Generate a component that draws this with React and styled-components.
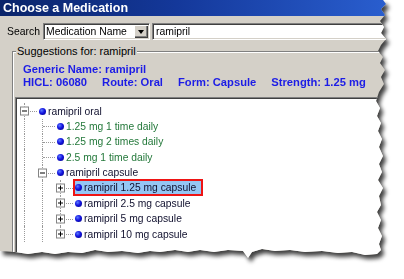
import React from "react";
import styled, { createGlobalStyle } from "styled-components";

const Global = createGlobalStyle`
  html, body { margin: 0; padding: 0; background: #ffffff; }
  body { width: 404px; height: 279px; overflow: hidden; font-family: "Liberation Sans", Arial, sans-serif; }
  #root { width: 404px; height: 279px; }
`;

const torn = [
  "0px 0px", "383px 0px", "386px 4px", "381px 9px", "385px 15px", "380px 21px", "384px 27px",
  "381px 33px", "386px 39px", "381px 45px", "378px 51px", "383px 57px", "380px 63px", "385px 70px",
  "381px 77px", "384px 84px", "379px 92px", "376px 101px", "380px 108px", "377px 116px", "381px 123px",
  "378px 131px", "382px 139px", "379px 147px", "383px 156px", "379px 164px", "382px 172px",
  "378px 180px", "383px 188px", "379px 196px", "381px 205px", "377px 212px", "381px 220px",
  "378px 228px", "382px 236px", "379px 244px", "381px 250px", "377px 254px",
  "365px 255px", "352px 252px", "338px 253px", "322px 251px", "305px 252px", "290px 250px",
  "275px 251px", "262px 249px", "252px 252px", "248px 258px", "243px 251px", "228px 250px",
  "214px 252px", "200px 250px", "188px 252px", "175px 250px", "160px 252px", "150px 251px",
  "138px 253px", "122px 251px", "108px 252px", "95px 250px", "82px 253px", "68px 252px",
  "55px 254px", "42px 252px", "28px 254px", "15px 252px", "0px 251px"
].join(", ");

const Shadow = styled.div`
  width: 392px;
  height: 262px;
  filter: drop-shadow(3px 4px 2px rgba(0, 0, 0, 0.75));
`;

const Window = styled.div`
  width: 392px;
  height: 262px;
  background: #d4d0c8;
  clip-path: polygon(${torn});
  display: flex;
  flex-direction: column;
  overflow: hidden;
`;

const TitleBar = styled.div`
  height: 16px;
  flex: none;
  display: flex;
  align-items: center;
  padding-left: 3px;
  background: linear-gradient(to right, #0a246a 0%, #14389a 45%, #2a5fd0 100%);
  color: #ffffff;
  font-weight: bold;
  font-size: 12.5px;
`;

const SearchRow = styled.div`
  display: flex;
  align-items: center;
  height: 17px;
  margin-top: 7px;
  padding-left: 7px;
  font-size: 10.4px;
  color: #000;
  flex: none;
`;

const Label = styled.span`
  width: 36px;
  flex: none;
`;

const Sunken = styled.div`
  box-sizing: border-box;
  height: 17px;
  background: #ffffff;
  border: 1px solid;
  border-color: #808080 #ffffff #ffffff #808080;
  box-shadow: inset 1px 1px 0 #404040, inset -1px -1px 0 #d4d0c8;
  display: flex;
  align-items: center;
  padding-left: 2px;
  font-size: 10.4px;
  color: #000;
  white-space: nowrap;
`;

const Combo = styled(Sunken)`
  width: 107px;
  flex: none;
  padding-right: 1px;
  justify-content: space-between;
`;

const Input = styled(Sunken)`
  margin-left: 2px;
  flex: 1;
  padding-left: 3px;
`;

const DropButton = styled.span`
  box-sizing: border-box;
  width: 14px;
  height: 13px;
  background: #d4d0c8;
  box-shadow: inset 1px 1px 0 #ffffff, inset -1px -1px 0 #404040, inset -2px -2px 0 #808080;
  display: flex;
  align-items: center;
  justify-content: center;
`;

const Arrow = styled.span`
  width: 0;
  height: 0;
  border-left: 3.5px solid transparent;
  border-right: 3.5px solid transparent;
  border-top: 4px solid #000;
  margin-top: 1px;
`;

const Group = styled.div`
  position: relative;
  margin-top: 11px;
  margin-left: 12px;
  flex: 1;
  display: flex;
  flex-direction: column;
  border-top: 1px solid #808080;
  border-left: 1px solid #808080;
  box-shadow: inset 1px 1px 0 #ffffff;
  min-height: 0;
`;

const Legend = styled.span`
  position: absolute;
  top: -7px;
  left: 3px;
  padding: 0 1px;
  line-height: 13px;
  background: #d4d0c8;
  font-size: 11px;
  color: #000;
  white-space: nowrap;
`;

const Info = styled.div`
  padding: 11px 0 0 10px;
  color: #1c1ce6;
  font-weight: bold;
  font-size: 11.2px;
  line-height: 13px;
  white-space: nowrap;
`;

const InfoLine = styled.div`
  display: flex;
  gap: ${(p) => p.$gap || 0}px;
`;

const Tree = styled.div`
  margin: 8px 0 0 2px;
  flex: 1;
  background: #ffffff;
  border-top: 1px solid #808080;
  border-left: 1px solid #808080;
  box-shadow: inset 1px 1px 0 #404040;
  padding: 5.3px 0 0 1px;
  font-size: 10.3px;
  white-space: nowrap;
  min-height: 0;
`;

const Row = styled.div`
  display: flex;
  align-items: center;
  height: 15.4px;
`;

const Cell = styled.span`
  position: relative;
  flex: none;
  align-self: stretch;
  width: ${(p) => p.$w}px;

  &::before {
    content: "";
    display: ${(p) => (p.$v === "none" ? "none" : "block")};
    position: absolute;
    left: 7px;
    top: 0;
    height: ${(p) => (p.$v === "top" ? "50%" : "100%")};
    border-left: 1px dotted #9a9a9a;
  }

  &::after {
    content: "";
    display: ${(p) => (p.$h ? "block" : "none")};
    position: absolute;
    left: 8px;
    right: 0;
    top: 50%;
    border-top: 1px dotted #9a9a9a;
  }
`;

const Expander = styled.span`
  position: absolute;
  z-index: 1;
  left: 3px;
  top: 50%;
  transform: translateY(-50%);
  box-sizing: border-box;
  width: 9px;
  height: 9px;
  border: 1px solid #848484;
  background: #ffffff;

  &::before {
    content: "";
    position: absolute;
    left: 1px;
    top: 3px;
    width: 5px;
    height: 1px;
    background: #000;
  }

  &::after {
    content: "";
    display: ${(p) => (p.$plus ? "block" : "none")};
    position: absolute;
    left: 3px;
    top: 1px;
    width: 1px;
    height: 5px;
    background: #000;
  }
`;

const Item = styled.span`
  box-sizing: border-box;
  display: inline-flex;
  align-items: center;
  gap: 2px;
  height: 17px;
  padding: 0 5px 0 0;
  border: 2px solid ${(p) => (p.$selected ? "#ee1414" : "transparent")};
  background: ${(p) => (p.$selected ? "#95c6f4" : "transparent")};
  color: ${(p) => (p.$tone === "green" ? "#23783a" : "#10102e")};
  flex: none;
`;

const Dot = styled.span`
  width: 7px;
  height: 7px;
  border-radius: 50%;
  flex: none;
  background: radial-gradient(circle at 38% 35%, #5a7aff 0%, #1414e0 45%, #00007a 100%);
`;

const rows = [
  { anc: [], v: "full", exp: "minus", text: "ramipril oral", tone: "dark" },
  { anc: [true], v: "full", text: "1.25 mg 1 time daily", tone: "green" },
  { anc: [true], v: "full", text: "1.25 mg 2 times daily", tone: "green" },
  { anc: [true], v: "full", text: "2.5 mg 1 time daily", tone: "green" },
  { anc: [true], v: "full", exp: "minus", text: "ramipril capsule", tone: "dark" },
  { anc: [true, true], v: "full", exp: "plus", text: "ramipril 1.25 mg capsule", tone: "dark", selected: true },
  { anc: [true, true], v: "full", exp: "plus", text: "ramipril 2.5 mg capsule", tone: "dark" },
  { anc: [true, true], v: "full", exp: "plus", text: "ramipril 5 mg capsule", tone: "dark" },
  { anc: [true, true], v: "top", exp: "plus", text: "ramipril 10 mg capsule", tone: "dark" },
];

function TreeRow({ row }) {
  return (
    <Row>
      {row.anc.map((on, i) => (
        <Cell key={i} $w={18} $v={on ? "full" : "none"} />
      ))}
      <Cell $w={20} $v={row.v} $h>
        {row.exp && <Expander $plus={row.exp === "plus"} />}
      </Cell>
      <Item $selected={row.selected} $tone={row.tone}>
        <Dot />
        <span>{row.text}</span>
      </Item>
    </Row>
  );
}

export default function App() {
  return (
    <>
      <Global />
      <Shadow>
        <Window>
          <TitleBar>Choose a Medication</TitleBar>
          <SearchRow>
            <Label>Search</Label>
            <Combo>
              <span>Medication Name</span>
              <DropButton>
                <Arrow />
              </DropButton>
            </Combo>
            <Input>ramipril</Input>
          </SearchRow>
          <Group>
            <Legend>Suggestions for: ramipril</Legend>
            <Info>
              <InfoLine>Generic Name: ramipril</InfoLine>
              <InfoLine $gap={15}>
                <span>HICL: 06080</span>
                <span>Route: Oral</span>
                <span>Form: Capsule</span>
                <span>Strength: 1.25 mg</span>
              </InfoLine>
            </Info>
            <Tree>
              {rows.map((r, i) => (
                <TreeRow key={i} row={r} />
              ))}
            </Tree>
          </Group>
        </Window>
      </Shadow>
    </>
  );
}
